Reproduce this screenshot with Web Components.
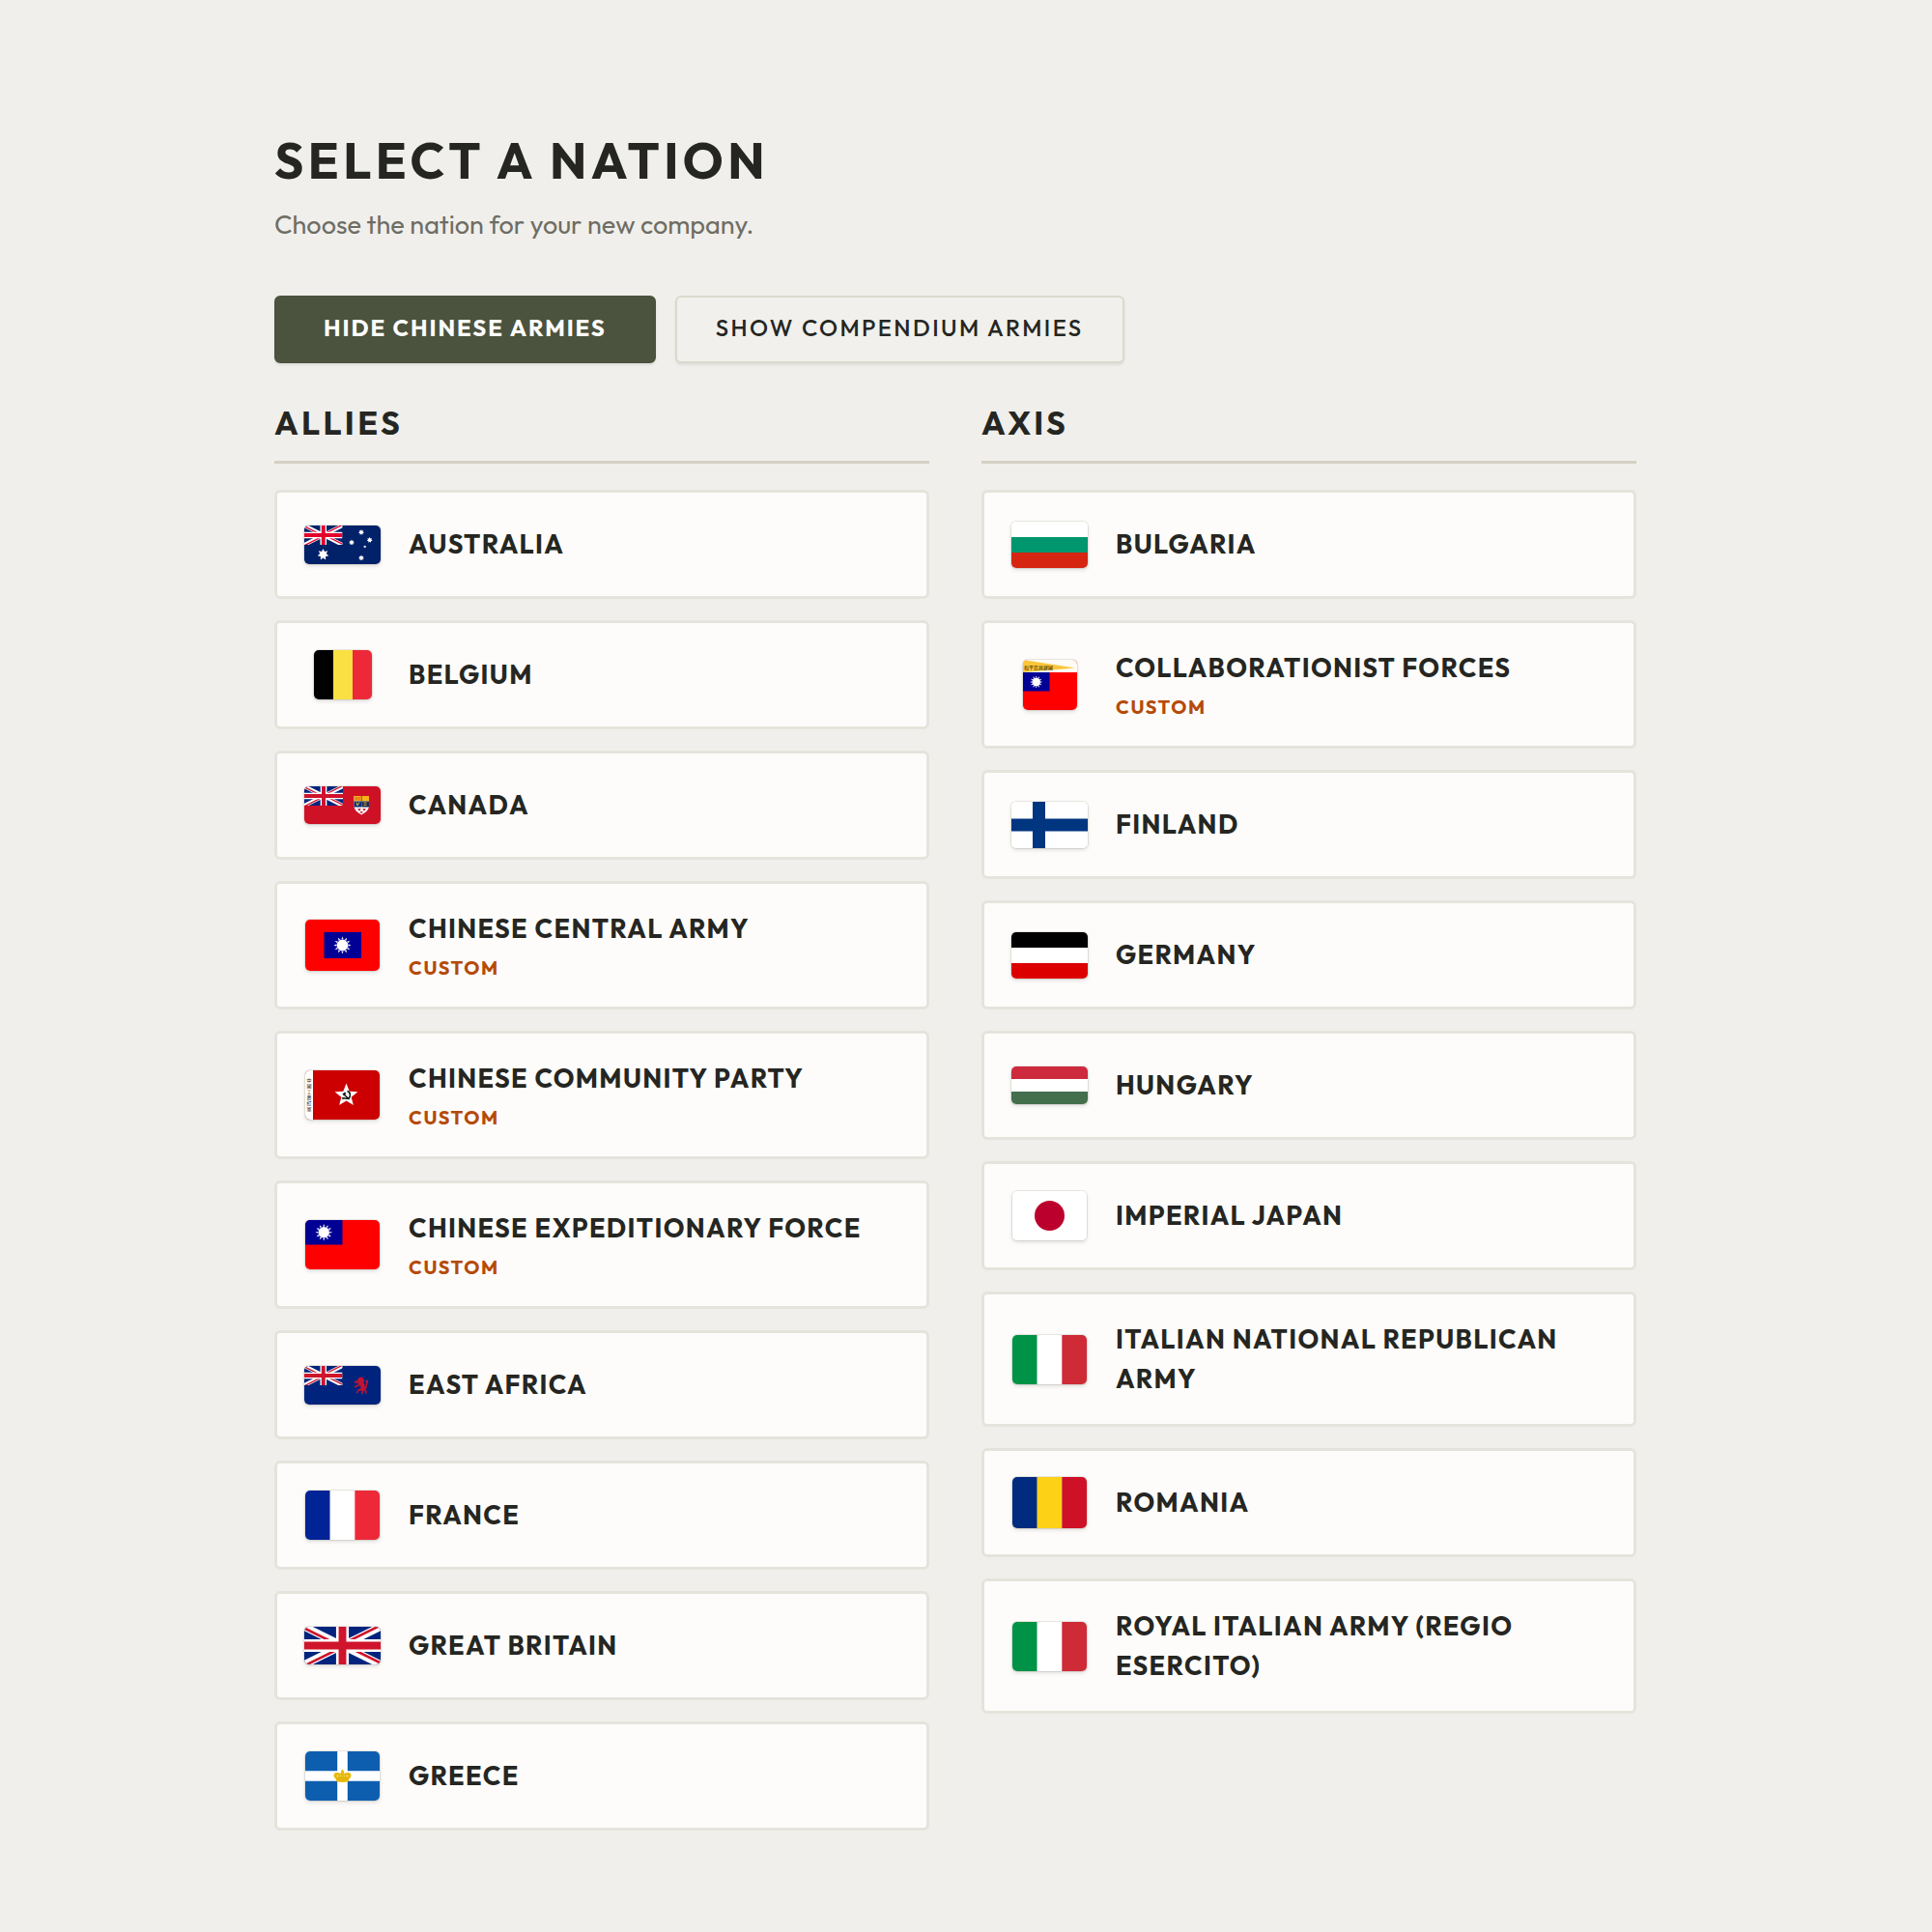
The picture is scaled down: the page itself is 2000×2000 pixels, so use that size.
<!DOCTYPE html>
<html lang="en">
<head>
<meta charset="utf-8">
<meta name="viewport" content="width=device-width, initial-scale=1">
<title>Select a Nation</title>
<style>
  html { background: #f0efeb; }
  body {
    margin: 0;
    padding: 134px 22px 100px 0;
    background: #f0efeb;
    color: #252622;
    font-family: Outfit, Lato, "Noto Sans CJK TC", sans-serif;
  }
</style>
</head>
<body>
<nation-page></nation-page>

<script>
/* ---------- flag artwork ---------- */
const rays = (cx, cy, r, inner, n, fill = '#fff') => {
  const pts = [];
  for (let i = 0; i < n * 2; i++) {
    const a = Math.PI * i / n - Math.PI / 2;
    const d = i % 2 ? inner : r;
    pts.push((cx + d * Math.cos(a)).toFixed(2) + ',' + (cy + d * Math.sin(a)).toFixed(2));
  }
  return `<polygon fill="${fill}" points="${pts.join(' ')}"/>`;
};
const sun = (cx, cy, r) => rays(cx, cy, r, r * 0.6, 12) +
  `<circle cx="${cx}" cy="${cy}" r="${r * 0.68}" fill="none" stroke="#000095" stroke-width="${r * 0.06}"/>` +
  `<circle cx="${cx}" cy="${cy}" r="${r * 0.6}" fill="#fff"/>`;
const unionJack = (w, h, blue, red) => `
  <svg x="0" y="0" width="${w}" height="${h}" viewBox="0 0 60 30" preserveAspectRatio="none">
    <clipPath id="uj"><path d="M30 15h30v15zv15H0zH0V0zV0h30z"/></clipPath>
    <path fill="${blue}" d="M0 0h60v30H0z"/>
    <path stroke="#fff" stroke-width="6" d="M0 0l60 30M60 0L0 30"/>
    <path stroke="${red}" stroke-width="4" clip-path="url(#uj)" d="M0 0l60 30M60 0L0 30"/>
    <path stroke="#fff" stroke-width="10" d="M30 0v30M0 15h60"/>
    <path stroke="${red}" stroke-width="6" d="M30 0v30M0 15h60"/>
  </svg>`;
const columns = (w, h, ...c) => c.map((f, i) => `<rect x="${i * w / 3}" width="${w / 3 + 0.1}" height="${h}" fill="${f}"/>`).join('');
const bands = (w, h, ...c) => c.map((f, i) => `<rect y="${i * h / 3}" width="${w}" height="${h / 3 + 0.1}" fill="${f}"/>`).join('');
const fill = (w, h, f) => `<rect width="${w}" height="${h}" fill="${f}"/>`;

const FLAGS = {
  australia: [79, 40, fill(79, 40, '#012169') + unionJack(39.5, 20, '#012169', '#e4002b') +
    rays(19.5, 30, 6, 3.4, 7) + rays(59, 7, 3, 1.8, 7) + rays(49, 17.5, 3, 1.8, 7) +
    rays(67.7, 15, 3, 1.8, 7) + rays(59, 33.5, 3, 1.8, 7) + rays(62.7, 22, 1.6, 0.8, 5)],
  belgium: [60, 51, columns(60, 51, '#000', '#fae042', '#ed2939')],
  canada: [79, 39, fill(79, 39, '#cf1126') + unionJack(40, 20, '#00247d', '#cf142b') + `
    <path fill="#fff" d="M51.500 10h15.500v10c0 5-4 7-7.750 9.500c-3.750-2.500-7.750-4.500-7.750-9.500z"/>
    <path fill="#f5b21b" d="M51.500 10h15.500v5.500h-15.500z"/>
    <path fill="#cf1126" d="M52 11.500h6v1h-6zM52 13.500h6v.8h-6z" opacity=".55"/>
    <path stroke="#7c3411" stroke-width=".8" d="M59.250 10v11"/>
    <path fill="#0b2f78" d="M51.500 15.500h7.500v6h-7.500z"/>
    <path fill="#1c2a52" d="M59.500 15.500h7.500v6h-7.500z"/>
    <path stroke="#f5c331" stroke-width=".9" fill="none" d="M54 16.500l1 3.500 2-3.500M61.500 17h3M61.500 19.300h3"/>
    <path fill="#cf1126" d="M55.500 22.500l1.500 1 1.500-1-.5 2.500h-2zM60.500 22.500l1.500 1 1.500-1-.5 2.500h-2zM58 25.500l1.250.8 1.250-.8-.4 2.200h-1.700z"/>`],
  central: [77, 53, fill(77, 53, '#fe0000') + '<rect x="19.500" y="13" width="38.500" height="27" fill="#000095"/>' + sun(38.5, 26.500, 9)],
  party: [77, 51, fill(77, 51, '#cc0000') + '<rect width="8" height="51" fill="#fff"/>' +
    [...'中國工農紅軍'].map((c, i) => `<text x="4" y="${11.500 + i * 6}" font-size="5" text-anchor="middle" fill="#222">${c}</text>`).join('') +
    rays(42.500, 26, 12.5, 5.4, 5) + `
    <path fill="none" stroke="#111" stroke-width="1.500" d="M43.500 21.500c4 1 4 7.500-.5 7.800c-1.500.1-2.500-.4-3.300-1.100M39.500 24.500l6 5.500"/>
    <path fill="#111" d="M38.500 24.500l2.500-2 1.500 1.500-2.500 2zM37.800 28.500l1.500-.8 1 1.500-1.500 1z"/>`],
  expeditionary: [77, 51, fill(77, 51, '#fe0000') + '<rect width="38.500" height="25.500" fill="#000095"/>' + sun(19.25, 12.75, 8.8)],
  eastafrica: [79, 40, fill(79, 40, '#00247d') + unionJack(39.5, 20, '#00247d', '#cf142b') + `
    <path fill="none" stroke="#c41230" stroke-linecap="round" stroke-linejoin="round" stroke-width="1.500"
      d="M57 14l-3 2M57 17.500l-4.500-.7M56.500 20l-4 1.500M60 25l-3.500-.3-1.800 3M60 25l1 1.500-1.500 2M61.500 24.500l2.500 1.700-.2 2M62 24c3-.5 1.800-4 2.500-5.500s1.500-1.500.8-3.300l-1.700 1"/>
    <path fill="#c41230" d="M56 12.800l2-1.300 2.500.5 1.500 2.500-.6 2.500 1.100 2.500.5 4.500-2.500 1.500-2.500-1.500.5-2.500-2.500-2.500.7-2-1.500-1.700z"/>`],
  france: [77, 51, columns(77, 51, '#002395', '#fff', '#ed2939')],
  britain: [79, 39, unionJack(79, 39, '#00247d', '#cf142b')],
  greece: [77, 51, fill(77, 51, '#0d5eaf') + '<path stroke="#fff" stroke-width="10.600" d="M38.500 0v51M0 25.500h77"/>' + `
    <path fill="#e8b90c" d="M32.500 31.200l-1-3c-3-2-2.500-5.700.5-6.200 1.800-.3 3.300.2 4.500 1l.9-2.200h-.6v-.9h1V18.800h1.400v1.100h1v.9h-.6l.9 2.200c1.200-.8 2.700-1.300 4.500-1 3 .5 3.500 4.200.5 6.200l-1 3c-3.500.9-8.500.9-12 0z"/>
    <path fill="#fff" d="M33.500 24.800l1 .8-1 .8-.8-.8zM43.500 24.800l1 .8-1 .8-.8-.8zM36.700 24.500l.6 1.500h-1zM40.300 24.500l.4 1.500h-1z" opacity=".8"/>
    <path fill="none" stroke="#c79a00" stroke-width=".4" d="M32.500 28.300c4-.9 8-.9 12 0"/>`],
  bulgaria: [79, 48, bands(79, 48, '#fff', '#00966e', '#d62612')],
  collaborationist: [56, 52, fill(56, 52, '#fe0000') + `<rect width="56" height="13" fill="#fdfbf6"/>
    <path fill="#fcc63a" d="M0 0L54 8.500 0 13z"/>
    <text x="1" y="10" font-size="5" fill="#2b2200">和平反共建國</text>
    <rect y="13" width="27.500" height="19.500" fill="#000095"/>` + sun(13.7, 23, 6.5)],
  finland: [79, 48, fill(79, 48, '#fff') + '<path stroke="#003580" stroke-width="13" d="M28.500 0v48M0 24h79"/>'],
  germany: [79, 48, bands(79, 48, '#000', '#fff', '#dd0000')],
  hungary: [79, 39, bands(79, 39, '#cd2a3e', '#fff', '#436f4d')],
  japan: [77, 51, fill(77, 51, '#fff') + '<circle cx="38.500" cy="25.500" r="15.500" fill="#bc002d"/>'],
  italy: [77, 51, columns(77, 51, '#009246', '#fff', '#ce2b37')],
  romania: [77, 53, columns(77, 53, '#002b7f', '#fcd116', '#ce1126')],
};

customElements.define('nation-flag', class extends HTMLElement {
  connectedCallback() {
    const [w, h, art] = FLAGS[this.getAttribute('name')];
    this.attachShadow({ mode: 'open' }).innerHTML = `
      <style>
        :host { display: flex; flex: none; width: 83px; height: 55px; align-items: center; justify-content: center; }
        svg.flag {
          display: block; border-radius: 5px; overflow: hidden;
          box-shadow: 0 0 0 1px rgba(60, 55, 30, .1), 0 2px 4px rgba(0, 0, 0, .12);
        }
      </style>
      <svg class="flag" width="${w}" height="${h}" viewBox="0 0 ${w} ${h}" aria-hidden="true">${art}</svg>`;
  }
});

/* ---------- toggle button ---------- */
customElements.define('toggle-button', class extends HTMLElement {
  connectedCallback() {
    this.attachShadow({ mode: 'open' }).innerHTML = `
      <style>
        :host { display: block; }
        button {
          display: block; margin: 0; padding: 16px 40px 20px;
          border: 2px solid #dbd9cc; border-radius: 6px;
          background: #f1f0ec; color: #252622;
          font: 500 24px/30px Outfit, Lato, sans-serif;
          letter-spacing: .1em; text-transform: uppercase; cursor: pointer;
          box-shadow: 0 2px 3px rgba(0, 0, 0, .08);
        }
        :host([pressed]) button {
          padding: 16px 49px 20px;
          background: #4b523d; border-color: #4b523d; color: #fff;
          font-weight: 700; letter-spacing: .08em;
        }
      </style>
      <button type="button" aria-pressed="${this.hasAttribute('pressed')}"><slot></slot></button>`;
  }
});

/* ---------- one nation ---------- */
customElements.define('nation-card', class extends HTMLElement {
  connectedCallback() {
    this.attachShadow({ mode: 'open' }).innerHTML = `
      <style>
        :host { display: block; }
        button {
          display: flex; align-items: center; gap: 27px;
          box-sizing: border-box; width: 100%; margin: 0; padding: 26px;
          border: 3px solid #e5e4dc; border-radius: 6px;
          background: #fdfcfa; color: inherit; font-family: inherit;
          text-align: left; cursor: pointer;
        }
        .text { display: flex; flex-direction: column; gap: 6px; min-width: 0; }
        .name { font-size: 27px; line-height: 41px; font-weight: 700; letter-spacing: .05em; text-transform: uppercase; }
        .tag { font-size: 20px; line-height: 28px; font-weight: 700; letter-spacing: .08em; text-transform: uppercase; color: #b54a08; }
      </style>
      <button type="button">
        <nation-flag name="${this.getAttribute('flag')}"></nation-flag>
        <span class="text">
          <span class="name"><slot></slot></span>
          ${this.hasAttribute('custom') ? '<span class="tag">Custom</span>' : ''}
        </span>
      </button>`;
  }
});

/* ---------- a side of the conflict ---------- */
customElements.define('nation-group', class extends HTMLElement {
  connectedCallback() {
    this.attachShadow({ mode: 'open' }).innerHTML = `
      <style>
        :host { display: block; min-width: 0; }
        h2 {
          margin: 0 0 27px; padding-bottom: 17px; border-bottom: 3px solid #d4d1c4;
          font-size: 34px; line-height: 44px; font-weight: 700;
          letter-spacing: .1em; text-transform: uppercase;
        }
        .list { display: flex; flex-direction: column; gap: 22px; }
      </style>
      <section>
        <h2>${this.getAttribute('heading')}</h2>
        <div class="list"><slot></slot></div>
      </section>`;
  }
});

/* ---------- page ---------- */
customElements.define('nation-page', class extends HTMLElement {
  connectedCallback() {
    this.attachShadow({ mode: 'open' }).innerHTML = `
      <style>
        :host { display: block; }
        main { max-width: 1410px; margin: 0 auto; }
        h1 { margin: 0; font-size: 52px; line-height: 64px; font-weight: 700; letter-spacing: .085em; text-transform: uppercase; }
        p { margin: 14px 0 54px; font-size: 27px; line-height: 40px; color: #6e6d64; }
        .actions { display: flex; flex-wrap: wrap; gap: 20px; margin-bottom: 40px; }
        .sides { display: grid; grid-template-columns: repeat(2, minmax(0, 1fr)); gap: 54px; align-items: start; }
        @media (max-width: 900px) { .sides { grid-template-columns: minmax(0, 1fr); } }
      </style>
      <main>
        <h1>Select a Nation</h1>
        <p>Choose the nation for your new company.</p>
        <div class="actions">
          <toggle-button pressed>Hide Chinese Armies</toggle-button>
          <toggle-button>Show Compendium Armies</toggle-button>
        </div>
        <div class="sides">
          <nation-group heading="Allies">
            <nation-card flag="australia">Australia</nation-card>
            <nation-card flag="belgium">Belgium</nation-card>
            <nation-card flag="canada">Canada</nation-card>
            <nation-card flag="central" custom>Chinese Central Army</nation-card>
            <nation-card flag="party" custom>Chinese Community Party</nation-card>
            <nation-card flag="expeditionary" custom>Chinese Expeditionary Force</nation-card>
            <nation-card flag="eastafrica">East Africa</nation-card>
            <nation-card flag="france">France</nation-card>
            <nation-card flag="britain">Great Britain</nation-card>
            <nation-card flag="greece">Greece</nation-card>
          </nation-group>
          <nation-group heading="Axis">
            <nation-card flag="bulgaria">Bulgaria</nation-card>
            <nation-card flag="collaborationist" custom>Collaborationist Forces</nation-card>
            <nation-card flag="finland">Finland</nation-card>
            <nation-card flag="germany">Germany</nation-card>
            <nation-card flag="hungary">Hungary</nation-card>
            <nation-card flag="japan">Imperial Japan</nation-card>
            <nation-card flag="italy">Italian National Republican Army</nation-card>
            <nation-card flag="romania">Romania</nation-card>
            <nation-card flag="italy">Royal Italian Army (Regio Esercito)</nation-card>
          </nation-group>
        </div>
      </main>`;
  }
});
</script>
</body>
</html>
